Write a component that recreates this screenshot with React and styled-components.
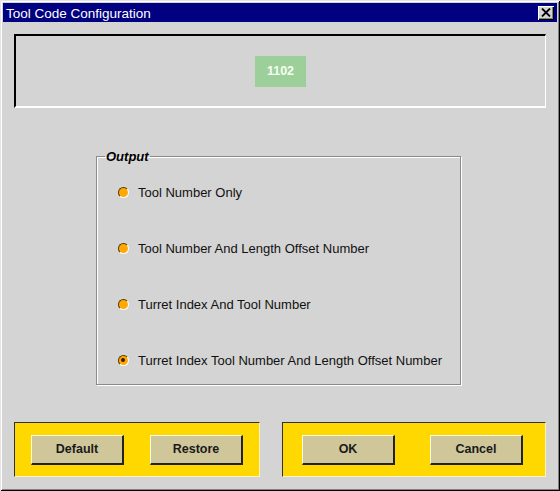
import React, { useState } from "react";
import styled, { createGlobalStyle } from "styled-components";

const GlobalStyle = createGlobalStyle`
    html, body {
        margin: 0;
        padding: 0;
        background: #d4d4d4;
    }
    body {
        font-family: "Liberation Sans", Arial, sans-serif;
    }
`;

const options = [
    "Tool Number Only",
    "Tool Number And Length Offset Number",
    "Turret Index And Tool Number",
    "Turret Index Tool Number And Length Offset Number",
];

const App = () => {
    const [selected, setSelected] = useState(3);
    return (
        <>
            <GlobalStyle />
            <Window>
                <TitleBar>
                    <span>Tool Code Configuration</span>
                    <CloseButton aria-label="close">
                        <svg width="10" height="9" viewBox="0 0 10 9">
                            <path d="M1 0.5 L9 8.5 M9 0.5 L1 8.5" stroke="#000" strokeWidth="1.8" />
                        </svg>
                    </CloseButton>
                </TitleBar>

                <Display>
                    <Badge>1102</Badge>
                </Display>

                <Group>
                    <Legend>Output</Legend>
                    {options.map((label, i) => (
                        <Option key={label} onClick={() => setSelected(i)}>
                            <Radio $checked={selected === i} />
                            <span>{label}</span>
                        </Option>
                    ))}
                </Group>

                <Footer>
                    <ButtonPanel $width="246px" $pad="0 16px">
                        <Button>Default</Button>
                        <Button>Restore</Button>
                    </ButtonPanel>
                    <ButtonPanel $width="264px" $pad="0 22px 0 19px">
                        <Button>OK</Button>
                        <Button>Cancel</Button>
                    </ButtonPanel>
                </Footer>
            </Window>
        </>
    );
};

const Window = styled.div`
    width: 560px;
    height: 491px;
    box-sizing: border-box;
    padding: 3px 3px 3px 3px;
    background: #d4d4d4;
    display: flex;
    flex-direction: column;
    box-shadow: inset 1px 1px 0 #e4e4e4, inset -1px -1px 0 #000,
        inset 2px 2px 0 #fff, inset -2px -2px 0 #808080;
`;

const TitleBar = styled.div`
    height: 19px;
    background: #000080;
    color: #fff;
    font-size: 13.5px;
    display: flex;
    align-items: center;
    justify-content: space-between;
    padding: 0 3px 0 3px;
    span {
        padding-top: 1px;
    }
`;

const CloseButton = styled.div`
    width: 16px;
    height: 14px;
    box-sizing: border-box;
    background: #d4d4d4;
    display: flex;
    align-items: center;
    justify-content: center;
    box-shadow: inset 1px 1px 0 #fff, inset -1px -1px 0 #000,
        inset -2px -2px 0 #808080;
`;

const Display = styled.div`
    margin: 12px 0 0 11px;
    width: 532px;
    height: 74px;
    box-sizing: border-box;
    border-top: 2px solid #000;
    border-left: 2px solid #000;
    border-right: 1px solid #fff;
    border-bottom: 2px solid #fff;
    display: flex;
    align-items: center;
    justify-content: center;
`;

const Badge = styled.div`
    width: 51px;
    height: 31px;
    background: #9dcf9a;
    color: #f4fff0;
    font-weight: bold;
    font-size: 12.5px;
    display: flex;
    align-items: center;
    justify-content: center;
`;

const Group = styled.fieldset`
    margin: 41px 0 0 93px;
    width: 365px;
    height: 236px;
    box-sizing: border-box;
    padding: 20px 0 0 21px;
    border: 1px solid #8a8a8a;
    box-shadow: inset 1px 1px 0 #fff, 1px 1px 0 #fff;
    display: flex;
    flex-direction: column;
    gap: 40px;
`;

const Legend = styled.legend`
    font-size: 13px;
    font-weight: bold;
    font-style: italic;
    color: #000;
    padding: 0 1px;
    margin-left: -13px;
`;

const Option = styled.label`
    display: flex;
    align-items: center;
    gap: 9px;
    height: 16px;
    font-size: 13px;
    color: #111;
    cursor: default;
`;

const Radio = styled.span`
    width: 11px;
    height: 11px;
    box-sizing: border-box;
    border-radius: 50%;
    background: #ffa800;
    border-top: 1.5px solid #5a3a00;
    border-left: 1.5px solid #5a3a00;
    border-right: 1px solid #fff;
    border-bottom: 1px solid #fff;
    position: relative;
    &::after {
        content: "";
        display: ${(p) => (p.$checked ? "block" : "none")};
        position: absolute;
        left: 2px;
        top: 2px;
        width: 4px;
        height: 4px;
        border-radius: 50%;
        background: #3a1a00;
    }
`;

const Footer = styled.div`
    margin: auto 0 11px 11px;
    display: flex;
    gap: 22px;
`;

const ButtonPanel = styled.div`
    width: ${(p) => p.$width};
    height: 55px;
    box-sizing: border-box;
    background: #ffd800;
    border-top: 1px solid #303030;
    border-left: 1px solid #303030;
    border-right: 1px solid #fff4c0;
    border-bottom: 1px solid #fff4c0;
    padding: ${(p) => p.$pad};
    display: flex;
    align-items: center;
    justify-content: space-between;
`;

const Button = styled.button`
    width: 93px;
    height: 30px;
    box-sizing: border-box;
    background: #cfc69a;
    border-top: 1px solid #fffbe0;
    border-left: 1px solid #fffbe0;
    border-right: 2px solid #222;
    border-bottom: 2px solid #222;
    font-family: "Liberation Sans", Arial, sans-serif;
    font-size: 12.5px;
    font-weight: bold;
    color: #1a1a1a;
    padding: 0;
`;

export default App;
